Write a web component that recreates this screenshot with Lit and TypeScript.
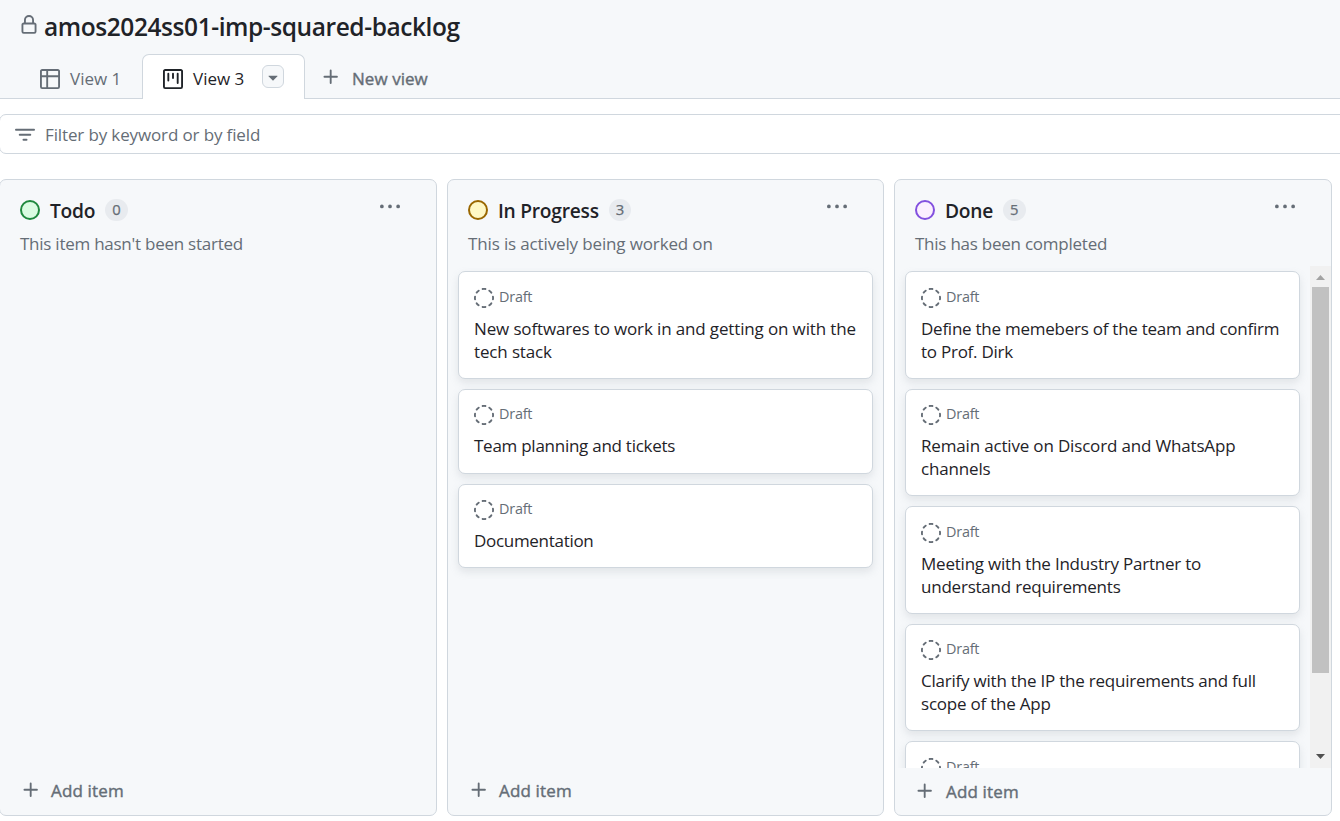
import { LitElement, html, css, svg } from "lit";
import { customElement, property } from "lit/decorators.js";
import { styleMap } from "lit/directives/style-map.js";

const ICONS: Record<string, string> = {
  lock: "M4 4a4 4 0 0 1 8 0v2h.25c.966 0 1.75.784 1.75 1.75v5.5A1.75 1.75 0 0 1 12.25 15h-8.5A1.75 1.75 0 0 1 2 13.25v-5.5C2 6.784 2.784 6 3.75 6H4Zm8.25 3.5h-8.5a.25.25 0 0 0-.25.25v5.5c0 .138.112.25.25.25h8.5a.25.25 0 0 0 .25-.25v-5.5a.25.25 0 0 0-.25-.25ZM10.5 6V4a2.5 2.5 0 1 0-5 0v2Z",
  table: "M0 1.75C0 .784.784 0 1.75 0h12.5C15.216 0 16 .784 16 1.75v12.5A1.75 1.75 0 0 1 14.25 16H1.75A1.75 1.75 0 0 1 0 14.25ZM6.5 6.5v8h7.75a.25.25 0 0 0 .25-.25V6.5Zm8-1.5V1.75a.25.25 0 0 0-.25-.25H6.5V5Zm-13 1.5v7.75c0 .138.112.25.25.25H5v-8ZM5 5V1.5H1.75a.25.25 0 0 0-.25.25V5Z",
  project: "M1.75 0h12.5C15.216 0 16 .784 16 1.75v12.5A1.75 1.75 0 0 1 14.25 16H1.75A1.75 1.75 0 0 1 0 14.25V1.75C0 .784.784 0 1.75 0ZM1.5 1.75v12.5c0 .138.112.25.25.25h12.5a.25.25 0 0 0 .25-.25V1.75a.25.25 0 0 0-.25-.25H1.75a.25.25 0 0 0-.25.25ZM11.75 3a.75.75 0 0 1 .75.75v7.5a.75.75 0 0 1-1.5 0v-7.5a.75.75 0 0 1 .75-.75Zm-8.25.75a.75.75 0 0 1 1.5 0v5.5a.75.75 0 0 1-1.5 0ZM8 3a.75.75 0 0 1 .75.75v3.5a.75.75 0 0 1-1.5 0v-3.5A.75.75 0 0 1 8 3Z",
  triangle: "m4.427 7.427 3.396 3.396a.25.25 0 0 0 .354 0l3.396-3.396A.25.25 0 0 0 11.396 7H4.604a.25.25 0 0 0-.177.427Z",
  plus: "M7.75 2a.75.75 0 0 1 .75.75V7h4.25a.75.75 0 0 1 0 1.5H8.5v4.25a.75.75 0 0 1-1.5 0V8.5H2.75a.75.75 0 0 1 0-1.5H7V2.75A.75.75 0 0 1 7.75 2Z",
  filter: "M.75 3h14.5a.75.75 0 0 1 0 1.5H.75a.75.75 0 0 1 0-1.5ZM3 7.75A.75.75 0 0 1 3.75 7h8.5a.75.75 0 0 1 0 1.5h-8.5A.75.75 0 0 1 3 7.75Zm3 4a.75.75 0 0 1 .75-.75h2.5a.75.75 0 0 1 0 1.5h-2.5a.75.75 0 0 1-.75-.75Z",
  kebab: "M8 9a1.5 1.5 0 1 0 0-3 1.5 1.5 0 0 0 0 3ZM1.5 9a1.5 1.5 0 1 0 0-3 1.5 1.5 0 0 0 0 3Zm13 0a1.5 1.5 0 1 0 0-3 1.5 1.5 0 0 0 0 3Z",
  draft: "M14.307 11.655a.75.75 0 0 1 .165 1.048 8.05 8.05 0 0 1-1.769 1.77.75.75 0 0 1-.883-1.214 6.552 6.552 0 0 0 1.44-1.439.75.75 0 0 1 1.047-.165Zm-2.652-9.962a.75.75 0 0 1 1.048-.165 8.05 8.05 0 0 1 1.77 1.769.75.75 0 0 1-1.214.883 6.552 6.552 0 0 0-1.439-1.44.75.75 0 0 1-.165-1.047ZM6.749.097a8.074 8.074 0 0 1 2.502 0 .75.75 0 1 1-.233 1.482 6.558 6.558 0 0 0-2.036 0A.751.751 0 0 1 6.749.097ZM.955 6.125a.75.75 0 0 1 .624.857 6.558 6.558 0 0 0 0 2.036.75.75 0 1 1-1.482.233 8.074 8.074 0 0 1 0-2.502.75.75 0 0 1 .858-.624Zm14.09 0a.75.75 0 0 1 .858.624c.13.829.13 1.673 0 2.502a.75.75 0 1 1-1.482-.233 6.558 6.558 0 0 0 0-2.036.75.75 0 0 1 .624-.857Zm-8.92 8.92a.75.75 0 0 1 .857-.624 6.558 6.558 0 0 0 2.036 0 .75.75 0 1 1 .233 1.482c-.829.13-1.673.13-2.502 0a.75.75 0 0 1-.624-.858Zm-4.432-3.39a.75.75 0 0 1 1.048.165 6.552 6.552 0 0 0 1.439 1.44.751.751 0 0 1-.883 1.212 8.05 8.05 0 0 1-1.77-1.769.75.75 0 0 1 .166-1.048Zm2.652-9.962A.75.75 0 0 1 4.18 2.74a6.556 6.556 0 0 0-1.44 1.44.751.751 0 0 1-1.212-.883 8.05 8.05 0 0 1 1.769-1.77.75.75 0 0 1 1.048.166Z",
};

interface Line {
  text: string;
  tracking: number;
}

interface Column {
  name: string;
  tone: string;
  note: Line;
  count: number;
  cards: Line[];
}

const line = (text: string, tracking = -0.3): Line => ({ text, tracking });
const tracked = (l: Line) => styleMap({ letterSpacing: `${l.tracking}px` });

const COLUMNS: Column[] = [
  { name: "Todo", tone: "green", note: line("This item hasn't been started", -0.25), count: 0, cards: [] },
  {
    name: "In Progress",
    tone: "yellow",
    note: line("This is actively being worked on", -0.14),
    count: 3,
    cards: [
      line("New softwares to work in and getting on with the\ntech stack", -0.14),
      line("Team planning and tickets", -0.26),
      line("Documentation"),
    ],
  },
  {
    name: "Done",
    tone: "purple",
    note: line("This has been completed", -0.24),
    count: 5,
    cards: [
      line("Define the memebers of the team and confirm\nto Prof. Dirk", -0.25),
      line("Remain active on Discord and WhatsApp\nchannels", -0.17),
      line("Meeting with the Industry Partner to\nunderstand requirements", -0.22),
      line("Clarify with the IP the requirements and full\nscope of the App", -0.22),
      line(""),
    ],
  },
];

@customElement("oct-icon")
class OctIcon extends LitElement {
  @property() name = "";
  static styles = css`
    :host { display: block; flex: none; width: 20px; height: 20px; }
    svg { display: block; fill: currentColor; }
  `;
  render() {
    return html`<svg width="20" height="20" viewBox="0 0 16 16">${svg`<path d=${ICONS[this.name]} />`}</svg>`;
  }
}

@customElement("board-column")
class BoardColumn extends LitElement {
  @property({ attribute: false }) column!: Column;
  static styles = css`
    :host {
      display: flex; flex-direction: column; box-sizing: border-box; height: 637px; min-width: 0;
      border: 1px solid #d0d7de; border-radius: 7px; background: #f6f8fa; color: #656d76;
    }
    .head { display: flex; align-items: center; height: 22px; padding: 19px 36px 0 20px; }
    .dot { box-sizing: border-box; width: 20px; height: 20px; border: 2px solid; border-radius: 50%; }
    .green { background: #dafbe1; border-color: #1f883d; }
    .yellow { background: #fff8c5; border-color: #9a6700; }
    .purple { background: #fbefff; border-color: #8250df; }
    h2 {
      margin: 2px 0 0 10px; font-size: 19.2px; line-height: 26px; font-weight: 600;
      letter-spacing: -0.25px; color: #1f2328; white-space: nowrap;
    }
    .count {
      box-sizing: border-box; min-width: 22px; height: 22px; margin-left: 10px; padding: 0 7px; border-radius: 11px;
      background: #e8ebef; font-size: 14.8px; line-height: 21px; text-align: center; -webkit-text-stroke: 0.25px;
    }
    .menu { margin: -6px 0 0 auto; }
    .note { height: 45px; padding: 10px 20px 0; font-size: 17px; line-height: 26px; box-sizing: border-box; white-space: nowrap; }
    .body { display: flex; flex: 1; min-height: 0; overflow: hidden; }
    .list { display: flex; flex-direction: column; gap: 10px; flex: 1; min-width: 0; padding: 5.25px 10px 0; }
    .card {
      flex: none; box-sizing: border-box; padding: 15.5px 15px 14.5px; border: 1px solid #d0d7de; border-radius: 7px;
      background: #fff; box-shadow: 0 4px 8px rgba(140, 149, 159, 0.2);
    }
    .kind { display: flex; align-items: center; height: 20px; font-size: 14.4px; letter-spacing: -0.2px; }
    .kind span { margin: -2px 0 0 5px; line-height: 20px; }
    .title { margin: 10px 0 0; min-height: 22.75px; font-size: 17px; line-height: 22.75px; color: #1f2328; white-space: pre; }
    .bar { display: flex; flex-direction: column; align-items: center; width: 21px; background: #f1f1f1; }
    .bar svg { flex: none; display: block; }
    .thumb { width: 17px; height: 386px; background: #c1c1c1; }
    .down { margin-top: auto; }
    .add {
      display: flex; align-items: center; height: 47px; padding-left: 21px; font-size: 17px;
      letter-spacing: 0.15px; -webkit-text-stroke: 0.4px;
    }
    .add.scrolled { padding-left: 20px; }
    .add oct-icon { margin-top: -3px; }
    .add.scrolled oct-icon { margin-top: -1px; }
    .add span { margin: -1px 0 0 10px; line-height: 24px; }
    .add.scrolled span { margin: 1px 0 0 11px; }
  `;
  render() {
    const c = this.column;
    const scrolls = c.count > 4;
    return html`
      <header class="head">
        <span class="dot ${c.tone}"></span>
        <h2>${c.name}</h2>
        <span class="count">${c.count}</span>
        <oct-icon class="menu" name="kebab"></oct-icon>
      </header>
      <div class="note" style=${tracked(c.note)}>${c.note.text}</div>
      <div class="body">
        <div class="list">
          ${c.cards.map(
            (card) => html`<article class="card">
              <div class="kind"><oct-icon name="draft"></oct-icon><span>Draft</span></div>
              <p class="title" style=${tracked(card)}>${card.text}</p>
            </article>`,
          )}
        </div>
        ${scrolls
          ? html`<div class="bar">
              <svg width="21" height="21"><path d="M6 14h9l-4.500-5z" fill="#a3a3a3" /></svg>
              <div class="thumb"></div>
              <svg class="down" width="21" height="21"><path d="M6 7h9l-4.500 5z" fill="#505050" /></svg>
            </div>`
          : ""}
      </div>
      <footer class="add ${scrolls ? "scrolled" : ""}"><oct-icon name="plus"></oct-icon><span>Add item</span></footer>
    `;
  }
}

@customElement("app-root")
class AppRoot extends LitElement {
  static styles = css`
    :host {
      display: block; height: 821px; overflow: hidden; background: #fff; color: #656d76;
      font-family: "Open Sans", "Noto Sans", sans-serif; font-size: 17px;
    }
    .top { box-sizing: border-box; height: 99px; background: #f6f8fa; box-shadow: inset 0 -1px #d0d7de; }
    .name { display: flex; height: 54px; padding: 15px 0 0 19px; box-sizing: border-box; }
    h1 { margin: -5px 0 0 5px; font-size: 24.5px; line-height: 34px; font-weight: 600; letter-spacing: -0.43px; color: #1f2328; white-space: nowrap; }
    .tabs { display: flex; height: 45px; letter-spacing: 0; line-height: 24px; white-space: nowrap; }
    .tab { display: flex; box-sizing: border-box; padding-top: 12px; }
    .tab span { margin-left: 10px; }
    .first { width: 142px; padding: 15px 0 0 40px; }
    .active { width: 163px; padding: 14px 0 0 20px; border: 1px solid #d0d7de; border-bottom: 0; border-radius: 7px 7px 0 0; background: #fff; color: #1f2328; }
    .first span, .active span { margin-top: -2px; }
    .caret {
      box-sizing: border-box; display: flex; justify-content: center; align-items: center; width: 22px; height: 23px;
      margin: -4px 0 0 18px; border: 1px solid #d0d7de; border-radius: 6px; background: #f6f8fa; color: #656d76;
    }
    .new { padding: 13px 0 0 16px; -webkit-text-stroke: 0.4px; letter-spacing: 0.05px; }
    .new span { margin: 0 0 0 11px; }
    .filter {
      display: flex; align-items: center; box-sizing: border-box; height: 40px; margin: 15px -20px 0 -1px; padding-left: 15px;
      border: 1px solid #d0d7de; border-radius: 7px; letter-spacing: -0.13px; white-space: nowrap;
    }
    .filter oct-icon { margin-top: 2px; }
    .filter span { margin-left: 10px; }
    .board { display: grid; grid-template-columns: 438px 437px 438px; gap: 10px; margin: 25px 0 0 -1px; }
  `;
  render() {
    return html`
      <header class="top">
        <div class="name"><oct-icon name="lock"></oct-icon><h1>amos2024ss01-imp-squared-backlog</h1></div>
        <nav class="tabs">
          <div class="tab first"><oct-icon name="table"></oct-icon><span>View 1</span></div>
          <div class="tab active">
            <oct-icon name="project"></oct-icon><span>View 3</span>
            <div class="caret"><oct-icon name="triangle"></oct-icon></div>
          </div>
          <div class="tab new"><oct-icon name="plus"></oct-icon><span>New view</span></div>
        </nav>
      </header>
      <div class="filter"><oct-icon name="filter"></oct-icon><span>Filter by keyword or by field</span></div>
      <main class="board">${COLUMNS.map((c) => html`<board-column .column=${c}></board-column>`)}</main>
    `;
  }
}
